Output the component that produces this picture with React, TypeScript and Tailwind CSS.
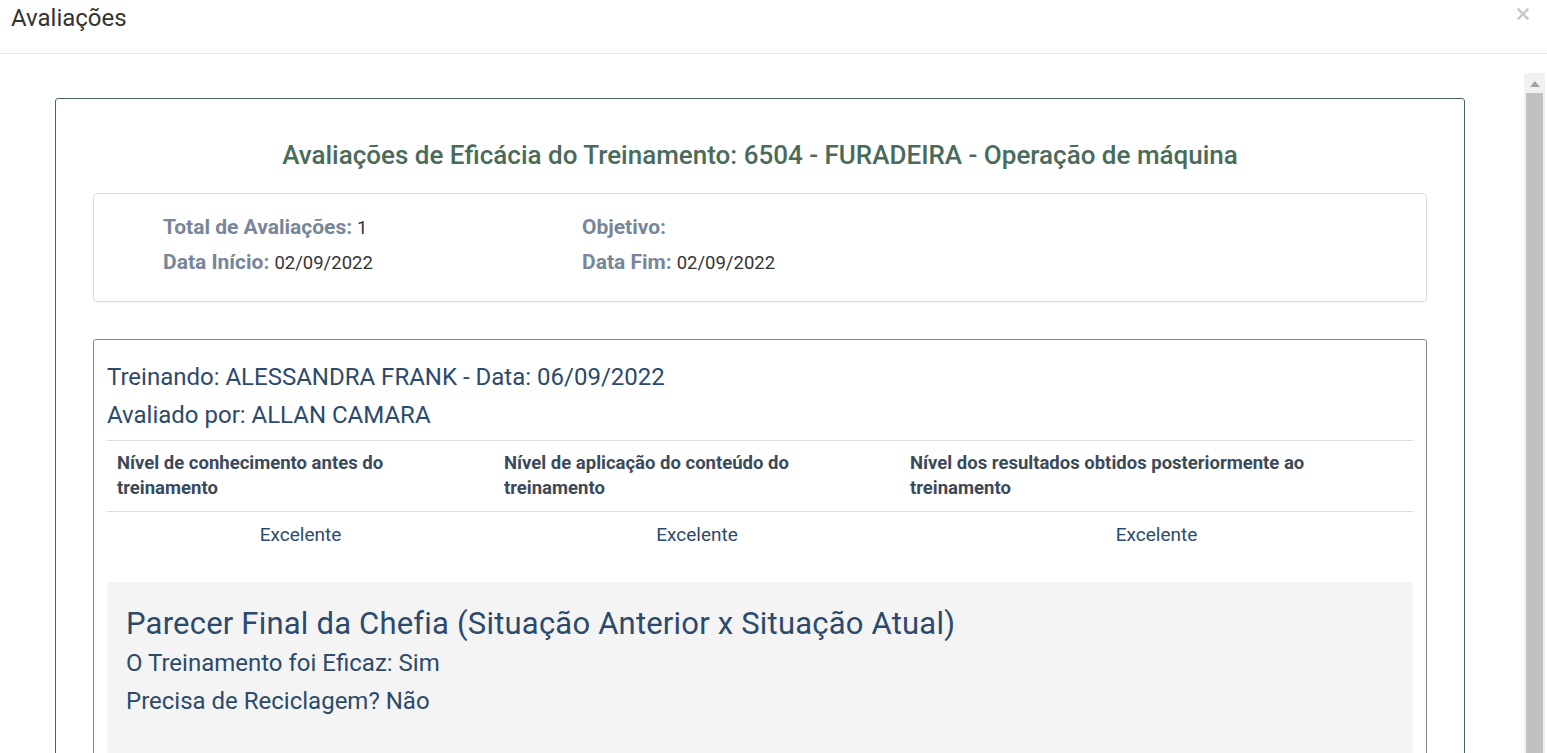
const columns = [
    {title: "Nível de conhecimento antes do treinamento", width: "w-[387px]", max: "max-w-[300px]", value: "Excelente"},
    {title: "Nível de aplicação do conteúdo do treinamento", width: "w-[406px]", max: "max-w-[320px]", value: "Excelente"},
    {title: "Nível dos resultados obtidos posteriormente ao treinamento", width: "flex-1", max: "max-w-[420px]", value: "Excelente"},
];

const InfoItem = ({label, value}: {label: string; value: string}) => (
    <p className="h-[24px] flex items-baseline gap-[5px] leading-[24px]">
        <span className="text-[21px] leading-[24px] font-bold text-[#778699]">{label}</span>
        {value && <span className="text-[18.5px] leading-[24px] text-[#333]">{value}</span>}
    </p>
);

const App = () => {
    return (
        <div className="w-[1547px] h-[753px] overflow-hidden bg-white flex flex-col font-['Roboto',sans-serif]">
            <div className="h-[54px] shrink-0 border-b border-[#e5e5e5] flex items-start justify-between pl-[11px] pr-[18px] pt-[4px]">
                <h4 className="text-[24px] leading-[28px] text-[#333]">Avaliações</h4>
                <button className="mt-[4px] w-[12px] h-[12px]">
                    <svg width="12" height="12" viewBox="0 0 12 12">
                        <path d="M1.5 1.5 L10.5 10.5 M10.5 1.5 L1.5 10.5" stroke="#c9c9c9" strokeWidth="2.6" strokeLinecap="square"/>
                    </svg>
                </button>
            </div>

            <div className="flex flex-1 min-h-0">
                <div className="flex-1 pl-[55px] pt-[44px] min-w-0">
                    <div className="w-[1410px] border border-[#46695b] rounded-[3px] px-[37px] pt-[41px] h-[800px]">
                        <h2 className="text-center text-[26px] leading-[30px] font-medium text-[#4a6b5a]">
                            Avaliações de Eficácia do Treinamento: 6504 - FURADEIRA - Operação de máquina
                        </h2>

                        <div className="mt-[23px] border border-[#ddd] rounded-[4px] shadow-[0_1px_2px_rgba(0,0,0,0.06)] pl-[69px] pt-[21px] pb-[27px] flex">
                            <div className="w-[419px] flex flex-col gap-[11px]">
                                <InfoItem label="Total de Avaliações:" value="1"/>
                                <InfoItem label="Data Início:" value="02/09/2022"/>
                            </div>
                            <div className="flex flex-col gap-[11px]">
                                <InfoItem label="Objetivo:" value=""/>
                                <InfoItem label="Data Fim:" value="02/09/2022"/>
                            </div>
                        </div>

                        <div className="mt-[37px] border border-[#888] rounded-[3px] px-[13px] pt-[22px] h-[600px]">
                            <div className="text-[24px] leading-[30px] text-[#2c4a6b] flex flex-col gap-[8px]">
                                <p>Treinando: ALESSANDRA FRANK - Data: 06/09/2022</p>
                                <p>Avaliado por: ALLAN CAMARA</p>
                            </div>

                            <div className="mt-[10px] border-t border-[#ddd]">
                                <div className="flex border-b border-[#ddd]">
                                    {columns.map((c) => (
                                        <div key={c.title} className={`${c.width} px-[10px] py-[10px]`}>
                                            <span className={`block ${c.max} text-[18.5px] leading-[25px] font-bold text-[#3b4a5a]`}>{c.title}</span>
                                        </div>
                                    ))}
                                </div>
                                <div className="flex">
                                    {columns.map((c) => (
                                        <div key={c.title} className={`${c.width} pt-[11px] text-center text-[19px] leading-[24px] text-[#2c4a6b]`}>
                                            {c.value}
                                        </div>
                                    ))}
                                </div>
                            </div>

                            <div className="mt-[35px] bg-[#f4f4f4] px-[19px] pt-[24px] h-[200px] text-[#2c4a6b]">
                                <h3 className="text-[31px] tracking-[0.2px] leading-[36px]">Parecer Final da Chefia (Situação Anterior x Situação Atual)</h3>
                                <p className="mt-[6px] text-[24px] leading-[30px]">O Treinamento foi Eficaz: Sim</p>
                                <p className="mt-[8px] text-[24px] leading-[30px]">Precisa de Reciclagem? Não</p>
                            </div>
                        </div>
                    </div>
                </div>

                <div className="w-[21px] mr-[2px] mt-[19px] bg-[#f1f1f1] flex flex-col items-center shrink-0">
                    <svg width="10" height="6" viewBox="0 0 10 6" className="mt-[8px]">
                        <path d="M0 6 L5 0 L10 6 Z" fill="#a3a3a3"/>
                    </svg>
                    <div className="mt-[6px] w-[17px] flex-1 bg-[#c1c1c1]"/>
                </div>
            </div>
        </div>
    );
};

export default App;
